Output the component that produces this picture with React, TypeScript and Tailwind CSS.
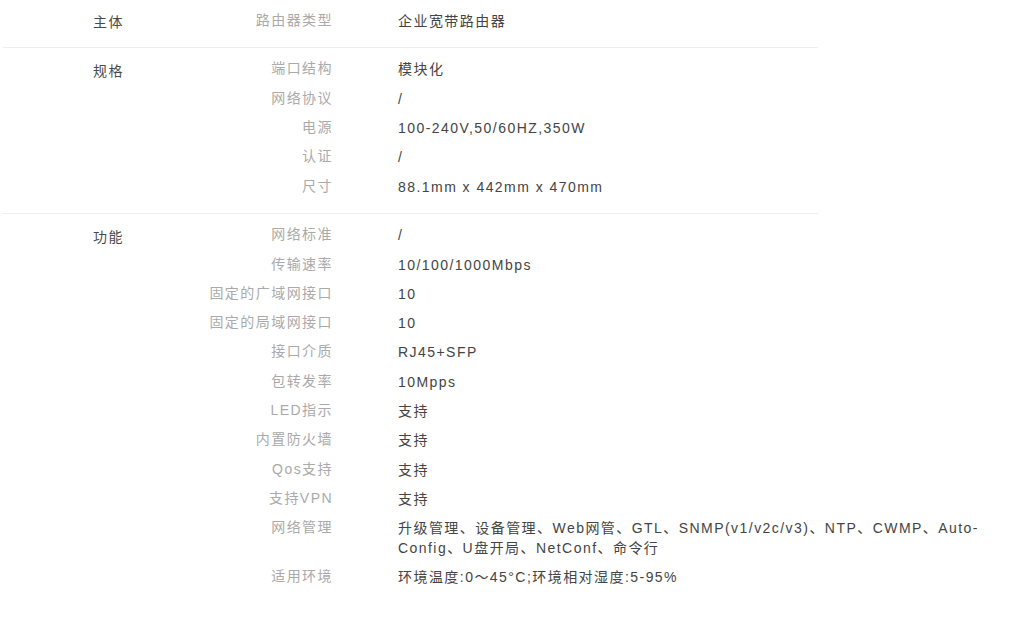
type Row = { label: string; value: string };
type Group = { title: string; rows: Row[] };

const groups: Group[] = [
  {
    title: "主体",
    rows: [{ label: "路由器类型", value: "企业宽带路由器" }],
  },
  {
    title: "规格",
    rows: [
      { label: "端口结构", value: "模块化" },
      { label: "网络协议", value: "/" },
      { label: "电源", value: "100-240V,50/60HZ,350W" },
      { label: "认证", value: "/" },
      { label: "尺寸", value: "88.1mm x 442mm x 470mm" },
    ],
  },
  {
    title: "功能",
    rows: [
      { label: "网络标准", value: "/" },
      { label: "传输速率", value: "10/100/1000Mbps" },
      { label: "固定的广域网接口", value: "10" },
      { label: "固定的局域网接口", value: "10" },
      { label: "接口介质", value: "RJ45+SFP" },
      { label: "包转发率", value: "10Mpps" },
      { label: "LED指示", value: "支持" },
      { label: "内置防火墙", value: "支持" },
      { label: "Qos支持", value: "支持" },
      { label: "支持VPN", value: "支持" },
      {
        label: "网络管理",
        value:
          "升级管理、设备管理、Web网管、GTL、SNMP(v1/v2c/v3)、NTP、CWMP、Auto-Config、U盘开局、NetConf、命令行",
      },
      { label: "适用环境", value: "环境温度:0～45°C;环境相对湿度:5-95%" },
    ],
  },
];

export default function App() {
  return (
    <div
      className="min-h-screen bg-white px-[3px] text-[14px] tracking-[1.45px]"
      style={{ fontFamily: '"Liberation Sans", Arial, "Noto Sans CJK SC", sans-serif' }}
    >
      {groups.map((g, gi) => (
        <div key={g.title}>
          <div className={`flex ${gi === 0 ? "pt-[6px]" : "pt-[7px]"} pb-[11.5px]`}>
            <div className="w-[190px] shrink-0 pl-[90px] pt-[6px] leading-[20px] text-[#4a4a4a]">
              {g.title}
            </div>
            <div className="flex flex-col">
              {g.rows.map((r) => (
                <div key={r.label} className="flex py-[4.65px] leading-[20px]">
                  <div className="w-[140px] shrink-0 -mt-[1px] text-right text-[#aaa]">
                    {r.label}
                  </div>
                  <div className="ml-[65px] w-[600px] text-[#444]">{r.value}</div>
                </div>
              ))}
            </div>
          </div>
          {gi < groups.length - 1 && <div className="h-px w-[815px] bg-[#eeeeee]" />}
        </div>
      ))}
    </div>
  );
}
